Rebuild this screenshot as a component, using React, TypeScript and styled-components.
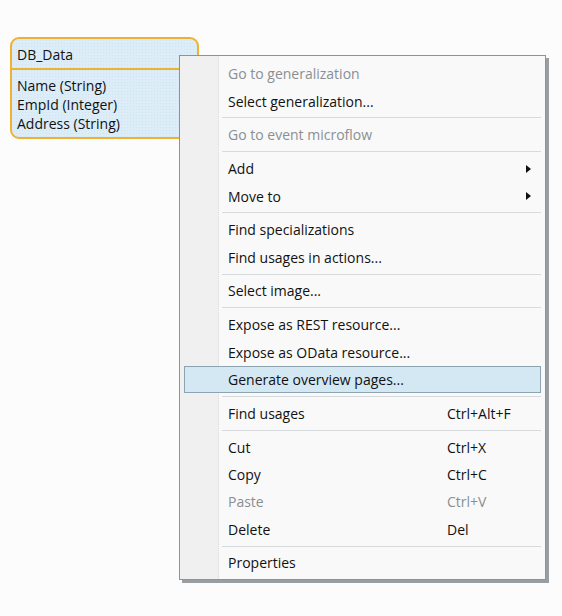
import React from "react";
import styled, { createGlobalStyle } from "styled-components";

const GlobalStyle = createGlobalStyle`
  html, body {
    margin: 0;
    padding: 0;
    background: #fcfcfc;
  }
  body {
    font-family: "Open Sans", "Noto Sans", sans-serif;
    font-size: 14px;
    color: #111;
  }
`;

const Canvas = styled.div`
  position: relative;
  width: 562px;
  height: 616px;
  padding: 37px 0 0 10px;
  box-sizing: border-box;
  overflow: hidden;
`;

const Entity = styled.div`
  width: 189px;
  height: 102px;
  box-sizing: border-box;
  border: 2px solid #efb134;
  border-radius: 9px;
  background-color: #dcedf8;
  background-image: radial-gradient(#cfe4f2 0.6px, transparent 0.8px);
  background-size: 3px 3px;
  display: flex;
  flex-direction: column;
`;

const EntityTitle = styled.div`
  height: 31px;
  padding: 1px 5px 0;
  display: flex;
  align-items: center;
  border-bottom: 2px solid #efb134;
  box-sizing: border-box;
`;

const AttrList = styled.div`
  display: flex;
  flex-direction: column;
  padding: 6px 5px 0;
  line-height: 19px;
`;

const Menu = styled.div`
  position: absolute;
  left: 179px;
  top: 55px;
  width: 367px;
  height: 525px;
  box-sizing: border-box;
  border: 1px solid #8d9396;
  background: #f9f9f9;
  box-shadow: 3px 3px 0 0 #989ea1;
  padding: 4px 4px 0 4px;
  display: flex;
  flex-direction: column;

  &::before {
    content: "";
    position: absolute;
    left: 0;
    top: 0;
    bottom: 0;
    width: 38px;
    background: #f0f0f0;
    border-right: 1px dotted #dcdcdc;
  }
`;

const Row = styled.div<{ $disabled?: boolean; $active?: boolean }>`
  position: relative;
  height: 27.4px;
  box-sizing: border-box;
  display: flex;
  align-items: center;
  padding-left: 43px;
  padding-right: 9px;
  color: ${(p) => (p.$disabled ? "#8a8f93" : "#111")};
  background: ${(p) => (p.$active ? "#d4e8f4" : "transparent")};
  border: 1px solid ${(p) => (p.$active ? "#8ea3b0" : "transparent")};
`;

const Label = styled.span`
  flex: 1;
  white-space: nowrap;
`;

const Shortcut = styled.span`
  width: 84px;
  white-space: nowrap;
`;

const Arrow = styled.span`
  width: 0;
  height: 0;
  border-top: 4px solid transparent;
  border-bottom: 4px solid transparent;
  border-left: 5px solid #111;
`;

const Separator = styled.div`
  position: relative;
  height: 1px;
  margin: 2.7px 0 2.7px 38px;
  background: #d6dadd;
`;

type Item =
  | { sep: true }
  | {
      sep?: false;
      label: string;
      shortcut?: string;
      disabled?: boolean;
      submenu?: boolean;
      active?: boolean;
    };

const items: Item[] = [
  { label: "Go to generalization", disabled: true },
  { label: "Select generalization..." },
  { sep: true },
  { label: "Go to event microflow", disabled: true },
  { sep: true },
  { label: "Add", submenu: true },
  { label: "Move to", submenu: true },
  { sep: true },
  { label: "Find specializations" },
  { label: "Find usages in actions..." },
  { sep: true },
  { label: "Select image..." },
  { sep: true },
  { label: "Expose as REST resource..." },
  { label: "Expose as OData resource..." },
  { label: "Generate overview pages...", active: true },
  { sep: true },
  { label: "Find usages", shortcut: "Ctrl+Alt+F" },
  { sep: true },
  { label: "Cut", shortcut: "Ctrl+X" },
  { label: "Copy", shortcut: "Ctrl+C" },
  { label: "Paste", shortcut: "Ctrl+V", disabled: true },
  { label: "Delete", shortcut: "Del" },
  { sep: true },
  { label: "Properties" },
];

export default function App() {
  return (
    <>
      <GlobalStyle />
      <Canvas>
        <Entity>
          <EntityTitle>DB_Data</EntityTitle>
          <AttrList>
            <span>Name (String)</span>
            <span>EmpId (Integer)</span>
            <span>Address (String)</span>
          </AttrList>
        </Entity>
        <Menu>
          {items.map((it, i) =>
            it.sep ? (
              <Separator key={i} />
            ) : (
              <Row key={i} $disabled={it.disabled} $active={it.active}>
                <Label>{it.label}</Label>
                {it.shortcut && <Shortcut>{it.shortcut}</Shortcut>}
                {it.submenu && <Arrow />}
              </Row>
            )
          )}
        </Menu>
      </Canvas>
    </>
  );
}
